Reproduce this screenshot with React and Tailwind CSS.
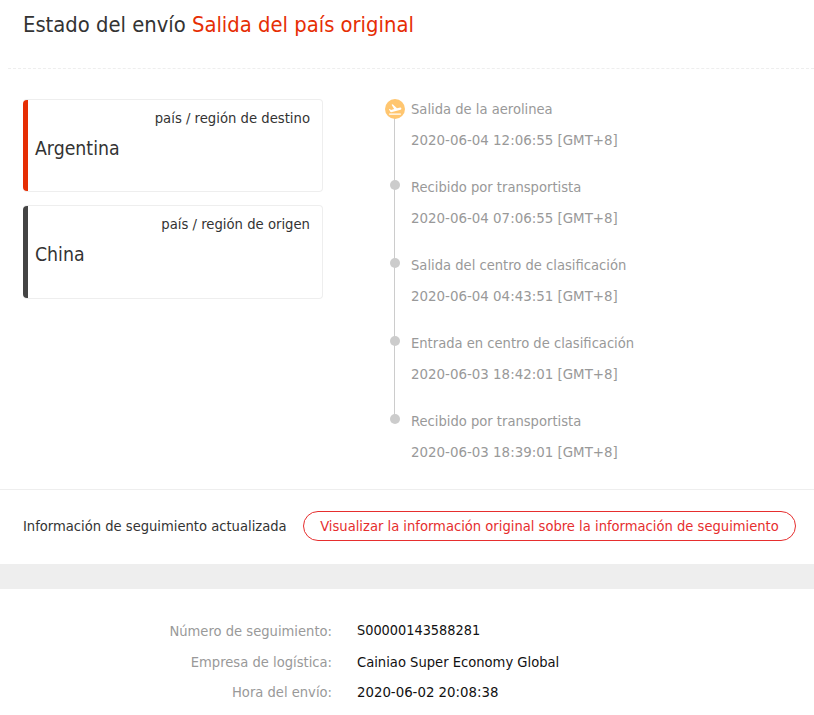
const font = { fontFamily: "'DejaVu Sans Condensed', 'Noto Sans', sans-serif" };

const events = [
  ["Salida de la aerolinea", "2020-06-04 12:06:55 [GMT+8]"],
  ["Recibido por transportista", "2020-06-04 07:06:55 [GMT+8]"],
  ["Salida del centro de clasificación", "2020-06-04 04:43:51 [GMT+8]"],
  ["Entrada en centro de clasificación", "2020-06-03 18:42:01 [GMT+8]"],
  ["Recibido por transportista", "2020-06-03 18:39:01 [GMT+8]"],
];

const details = [
  ["Número de seguimiento:", "S00000143588281"],
  ["Empresa de logística:", "Cainiao Super Economy Global"],
  ["Hora del envío:", "2020-06-02 20:08:38"],
];

function PlaceCard({ label, place, bar, height }) {
  return (
    <div className={`w-[300px] rounded border border-[#eeeeee] border-l-0 bg-white flex ${height}`}>
      <div className={`w-[5px] rounded-l ${bar}`} />
      <div className="flex-1 pl-[7px] pr-3 pt-[8px]">
        <p className="text-right text-[14.7px] leading-[20px] text-[#333333]">{label}</p>
        <p className="mt-[7px] text-[19.3px] leading-[28px] text-[#333333]">{place}</p>
      </div>
    </div>
  );
}

function TimelineRow({ title, time, first, last }) {
  return (
    <div className="flex h-[78px]">
      <div className="relative w-[20px] mr-[6px] flex justify-center">
        {!last && <div className="absolute left-[9px] top-[10px] bottom-[-10px] w-[1px] bg-[#cccccc]" />}
        {first ? (
          <div className="relative w-[20px] h-[20px] rounded-full bg-[#ffc670] flex items-center justify-center">
            <svg width="14" height="14" viewBox="0 0 24 24" fill="#fff">
              <path d="M2 19.500h20v2.500H2zM22.800 10.400c-.2-.8-1-1.300-1.800-1.100l-5.600 1.500-7.300-6.800-2 .5 4.400 7.600-5.300 1.400-2.100-1.600-1.600.4 2.800 4.800 1.100.5 16.300-4.400c.8-.2 1.300-1 1.100-1.900z" />
            </svg>
          </div>
        ) : (
          <div className="relative mt-[3px] w-[10px] h-[10px] rounded-full bg-[#cccccc]" />
        )}
      </div>
      <div className="text-[#999999]">
        <p className="text-[14.6px] leading-[20px]">{title}</p>
        <p className="mt-[11px] text-[14.9px] leading-[20px]">{time}</p>
      </div>
    </div>
  );
}

export default function App() {
  return (
    <div className="w-[814px] h-[715px] overflow-hidden bg-white" style={font}>
      <div className="ml-2 h-[69px] border-b border-dashed border-[#eeeeee] pl-[15px] pt-[8px]">
        <h1 className="text-[21.8px] leading-[34px] font-normal text-[#333333]">
          Estado del envío <span className="text-[#e62e04]">Salida del país original</span>
        </h1>
      </div>

      <div className="flex h-[421px] border-b border-[#eeeeee] pl-[23px] pt-[30px]">
        <div className="w-[362px] flex flex-col gap-[13px]">
          <PlaceCard label="país / región de destino" place="Argentina" bar="bg-[#e62e04]" height="h-[93px]" />
          <PlaceCard label="país / región de origen" place="China" bar="bg-[#444444]" height="h-[94px]" />
        </div>
        <div>
          {events.map((ev, i) => (
            <TimelineRow key={i} title={ev[0]} time={ev[1]} first={i === 0} last={i === events.length - 1} />
          ))}
        </div>
      </div>

      <div className="flex h-[74px] items-start pl-[23px] pt-[21px]">
        <span className="w-[280px] whitespace-nowrap text-[14.6px] leading-[30px] text-[#333333]">Información de seguimiento actualizada</span>
        <button className="h-[30px] w-[493px] rounded-full border border-[#e62e2e] text-[14.6px] text-[#e62e2e]">
          Visualizar la información original sobre la información de seguimiento
        </button>
      </div>

      <div className="h-[25px] bg-[#eeeeee]" />

      <div className="pt-[26px]">
        {details.map((d, i) => (
          <div key={d[0]} className="flex h-[30.5px] leading-[31px]">
            <span className="w-[332px] text-right text-[14.6px] text-[#999999]">{d[0]}</span>
            <span className={`ml-[25px] text-[#111111] ${i === 0 ? "text-[14.35px]" : i === 1 ? "text-[14.6px]" : "text-[14.8px]"}`}>{d[1]}</span>
          </div>
        ))}
      </div>
    </div>
  );
}
